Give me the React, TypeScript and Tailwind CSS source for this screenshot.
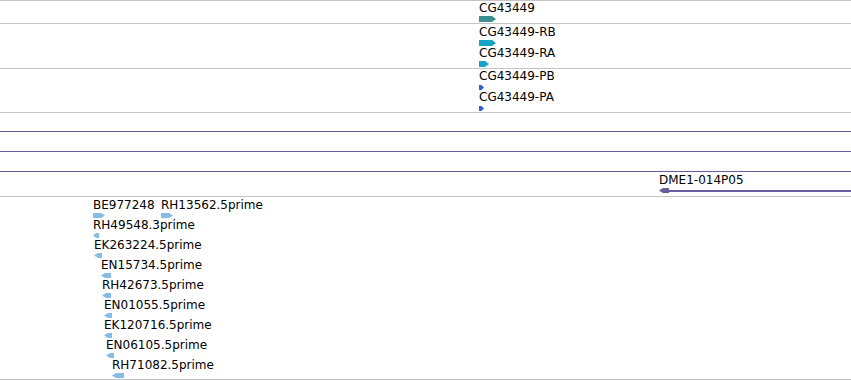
type Glyph = {
  label: string;
  x: number;
  y: number;
  w: number;
  h: number;
  dir: 'left' | 'right';
  color: string;
  gap?: number;
};

const font = { fontFamily: '"DejaVu Sans", Verdana, sans-serif' };

function Arrow({ w, h, dir, color }: { w: number; h: number; dir: 'left' | 'right'; color: string }) {
  const tip = Math.min(4, w / 2);
  const pts =
    dir === 'right'
      ? `0,0 ${w - tip},0 ${w},${h / 2} ${w - tip},${h} 0,${h}`
      : `${tip},0 ${w},0 ${w},${h} ${tip},${h} 0,${h / 2}`;
  return (
    <svg width={w} height={h} className="block">
      <polygon points={pts} fill={color} />
    </svg>
  );
}

function Feature({ f }: { f: Glyph }) {
  return (
    <div className="absolute flex flex-col items-start" style={{ left: f.x, top: f.y }}>
      <span className="text-[12px] leading-[14px] text-black whitespace-nowrap" style={font}>
        {f.label}
      </span>
      <div style={{ marginTop: f.gap ?? 1 }}>
        <Arrow w={f.w} h={f.h} dir={f.dir} color={f.color} />
      </div>
    </div>
  );
}

const teal = '#3a8d92';
const cyan = '#17a3c6';
const blue = '#3264cf';
const purple = '#6a5a9e';
const est = '#86bde4';

const geneTrack: Glyph[] = [{ label: 'CG43449', x: 479, y: 0, w: 17, h: 6, dir: 'right', color: teal }];

const transcripts: Glyph[] = [
  { label: 'CG43449-RB', x: 479, y: 1, w: 17, h: 6, dir: 'right', color: cyan },
  { label: 'CG43449-RA', x: 479, y: 22, w: 10, h: 6, dir: 'right', color: cyan },
];

const proteins: Glyph[] = [
  { label: 'CG43449-PB', x: 479, y: 0, w: 5, h: 5, dir: 'right', color: blue, gap: 2 },
  { label: 'CG43449-PA', x: 479, y: 21, w: 5, h: 5, dir: 'right', color: blue, gap: 2 },
];

const ests: Glyph[] = [
  { label: 'BE977248', x: 93, y: 1, w: 12, h: 5, dir: 'right', color: est },
  { label: 'RH13562.5prime', x: 161, y: 1, w: 12, h: 5, dir: 'right', color: est },
  { label: 'RH49548.3prime', x: 93, y: 21, w: 6, h: 5, dir: 'left', color: est },
  { label: 'EK263224.5prime', x: 94, y: 41, w: 8, h: 5, dir: 'left', color: est },
  { label: 'EN15734.5prime', x: 101, y: 61, w: 10, h: 5, dir: 'left', color: est },
  { label: 'RH42673.5prime', x: 102, y: 81, w: 9, h: 5, dir: 'left', color: est },
  { label: 'EN01055.5prime', x: 104, y: 101, w: 8, h: 5, dir: 'left', color: est },
  { label: 'EK120716.5prime', x: 104, y: 121, w: 8, h: 5, dir: 'left', color: est },
  { label: 'EN06105.5prime', x: 106, y: 141, w: 8, h: 5, dir: 'left', color: est },
  { label: 'RH71082.5prime', x: 112, y: 161, w: 12, h: 5, dir: 'left', color: est },
];

export default function App() {
  return (
    <div className="w-[851px] h-[380px] bg-white overflow-hidden flex flex-col border-t border-[#c4c4c4]">
      <div className="relative h-[23px] border-b border-[#c4c4c4] shrink-0">
        {geneTrack.map((f) => (
          <Feature key={f.label} f={f} />
        ))}
      </div>
      <div className="relative h-[45px] border-b border-[#c4c4c4] shrink-0">
        {transcripts.map((f) => (
          <Feature key={f.label} f={f} />
        ))}
      </div>
      <div className="relative h-[44px] border-b border-[#c4c4c4] shrink-0">
        {proteins.map((f) => (
          <Feature key={f.label} f={f} />
        ))}
      </div>
      <div className="h-[19px] border-b border-[#6a5a9e] shrink-0" />
      <div className="h-[20px] border-b border-[#6a5a9e] shrink-0" />
      <div className="h-[20px] border-b border-[#6a5a9e] shrink-0" />
      <div className="relative h-[25px] border-b border-[#c4c4c4] shrink-0">
        <div className="absolute left-[659px] top-[1px] flex flex-col items-start">
          <span className="text-[12px] leading-[14px] text-black whitespace-nowrap" style={font}>
            DME1-014P05
          </span>
        </div>
        <div className="absolute left-[659px] right-0 top-[16px] flex items-center">
          <Arrow w={10} h={5} dir="left" color={purple} />
          <div className="flex-1 h-[2px] bg-[#6a5a9e]" />
        </div>
      </div>
      <div className="relative h-[183px] border-b border-[#c4c4c4] shrink-0">
        {ests.map((f) => (
          <Feature key={f.label} f={f} />
        ))}
      </div>
    </div>
  );
}
